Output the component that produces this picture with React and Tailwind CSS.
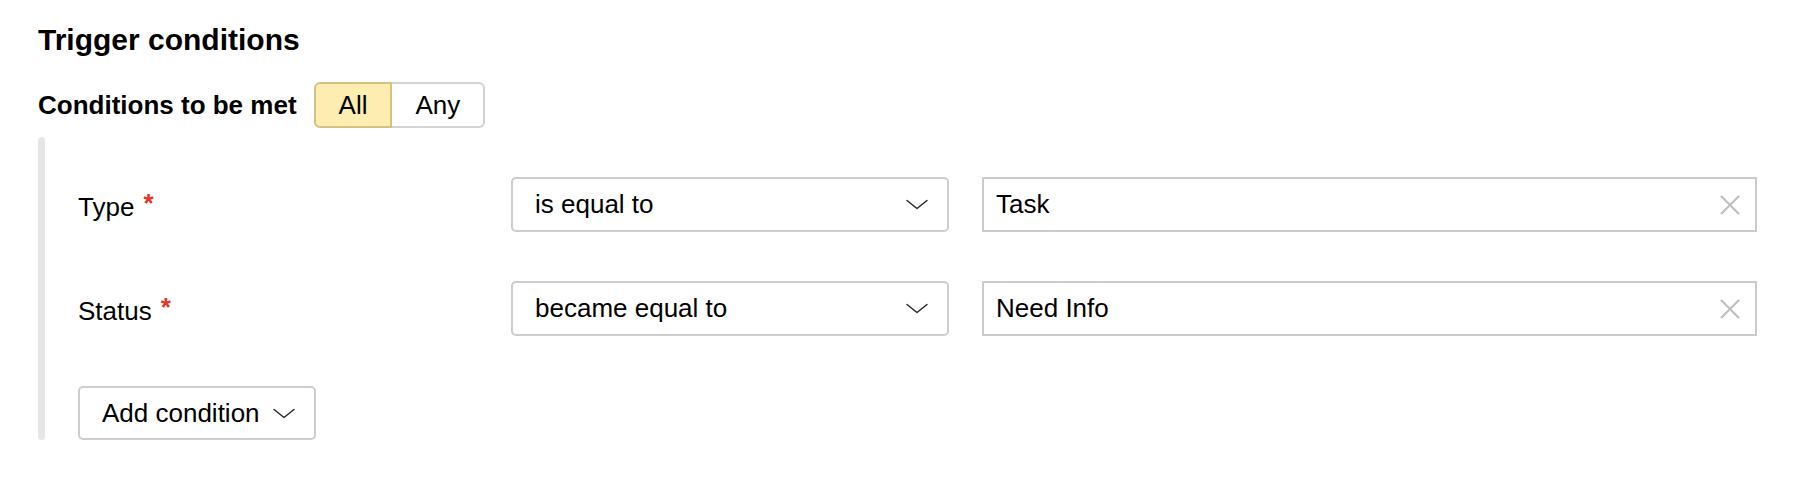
import React from "react";

const Chevron = ({ className = "" }) => (
  <svg width="22" height="11" viewBox="0 0 22 11" className={className} fill="none">
    <path d="M1 1.5 L11 9.5 L21 1.5" stroke="#222" strokeWidth="1.4" strokeLinecap="round" strokeLinejoin="round" />
  </svg>
);

const Cross = () => (
  <svg width="20" height="20" viewBox="0 0 20 20" fill="none">
    <path d="M1 1 L19 19 M19 1 L1 19" stroke="#bdbdbd" strokeWidth="2" />
  </svg>
);

const Row = ({ label, op, value, className = "" }) => (
  <div className={"flex items-center " + className}>
    <div className="w-[433px] shrink-0 text-[26px] leading-none text-black">
      {label}
      <span className="ml-[9px] font-bold text-[#e8352b] align-[4px]">*</span>
    </div>
    <div className="w-[438px] shrink-0 h-[55px] flex items-center justify-between border-2 border-[#cdcdcd] rounded-[5px] pl-[22px] pr-[19px] text-[26px] text-black bg-white">
      <span>{op}</span>
      <Chevron />
    </div>
    <div className="ml-[33px] flex-1 h-[55px] flex items-center justify-between border-2 border-[#cbcbcb] pl-[12px] pr-[15px] text-[26px] text-black bg-white">
      <span>{value}</span>
      <Cross />
    </div>
  </div>
);

export default function App() {
  return (
    <div
      className="w-[1802px] h-[484px] bg-white pl-[38px] pr-[45px] pt-[25px]"
      style={{ fontFamily: '"Liberation Sans", Arial, Helvetica, sans-serif' }}
    >
      <h1 className="text-[30px] leading-[30px] font-bold text-black">Trigger conditions</h1>

      <div className="mt-[27px] flex items-center">
        <span className="text-[26px] font-bold text-black leading-none">Conditions to be met</span>
        <div className="ml-[17px] flex h-[46px] text-[26px] text-black">
          <div className="flex items-center px-[23px] bg-[#fdedb0] border-2 border-[#d5c280] rounded-l-[6px]">
            All
          </div>
          <div className="flex items-center px-[23px] bg-white border-2 border-l-0 border-[#d2d2d2] rounded-r-[6px]">
            Any
          </div>
        </div>
      </div>

      <div className="mt-[9px] flex">
        <div className="w-[7px] shrink-0 rounded-full bg-[#e6e6e6]" />
        <div className="flex-1 pl-[33px] pt-[40px]">
          <Row label="Type" op="is equal to" value="Task" />
          <Row label="Status" op="became equal to" value="Need Info" className="mt-[49px]" />
          <div className="mt-[50px] flex">
            <button className="h-[54px] flex items-center gap-[13px] border-2 border-[#cdcdcd] rounded-[5px] pl-[22px] pr-[19px] text-[26px] text-black bg-white">
              <span>Add condition</span>
              <Chevron />
            </button>
          </div>
        </div>
      </div>
    </div>
  );
}
